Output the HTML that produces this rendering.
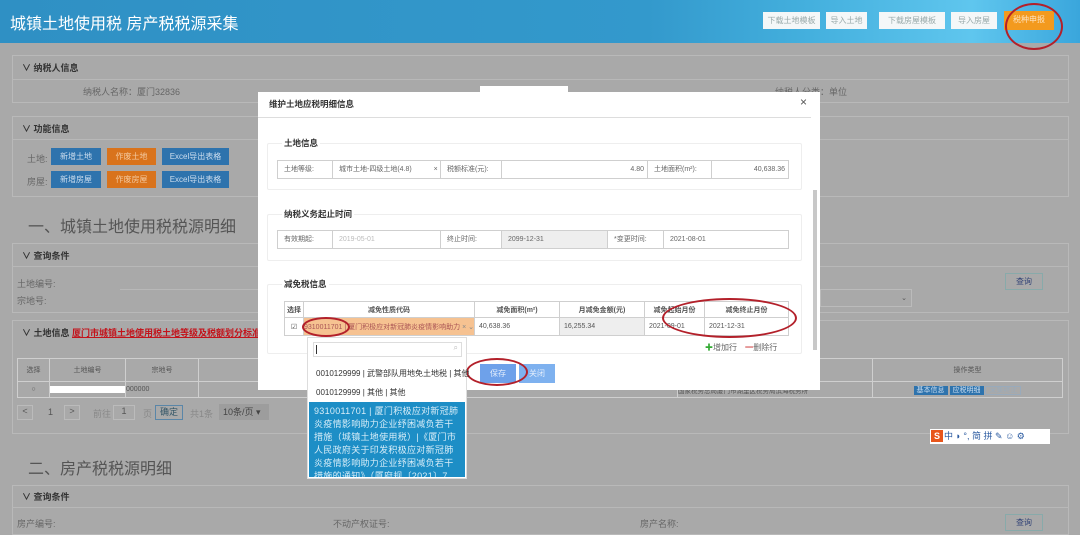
<!DOCTYPE html>
<html><head><meta charset="utf-8"><style>
*{box-sizing:border-box;margin:0;padding:0}
body{width:1080px;height:529px;overflow:hidden;background:#a9a9a9;font-family:"Liberation Sans","Noto Sans CJK SC",sans-serif;font-size:9px;color:#555;position:relative}
.a{position:absolute}
.hd{left:0;top:0;width:1080px;height:43px;background:linear-gradient(90deg,#2f90c4 0%,#3399cc 60%,#44b0de 75%,#5fc6ee 90%,#3aa6dc 100%)}
.hb{position:absolute;top:12px;height:17px;background:#f4f7f8;color:#9aa;font-size:8px;text-align:center;line-height:17px}
.pn{position:absolute;border:1px solid #b9b9b9;background:#a9a9a9}
.pt{position:absolute;left:10px;font-size:9px;font-weight:bold;color:#333}
.btn{position:absolute;height:17px;font-size:8px;color:#cde;text-align:center;line-height:17px}
.bl{background:#2e73ad}.or{background:#d9731c;color:#f3c9a0}
.ln{position:absolute;height:1px;background:#b8b8b8}
.m{left:258px;top:92px;width:562px;height:298px;background:#fff}
.fs{position:absolute;border:1px solid #eee;border-radius:2px}
.lg{position:absolute;font-size:8.5px;font-weight:bold;color:#333;background:#fff;padding:0 2px}
.row{position:absolute;border:1px solid #cfcfcf;display:flex;height:19px}
.row div{border-right:1px solid #cfcfcf;font-size:7px;line-height:17px;padding-left:6px;color:#666;white-space:nowrap;overflow:hidden}
td,th{border:1px solid #cfcfcf;font-size:7px;color:#555;font-weight:normal;white-space:nowrap;overflow:hidden}
.ell{position:absolute;border:2px solid #b3202a;border-radius:50%}
</style></head><body>
<div class="a hd"></div>
<div class="a" style="left:10px;top:10px;font-size:16px;color:#fff">城镇土地使用税 房产税税源采集</div>
<div class="hb" style="left:763px;width:57px">下载土地模板</div>
<div class="hb" style="left:826px;width:41px">导入土地</div>
<div class="hb" style="left:879px;width:66px">下载房屋模板</div>
<div class="hb" style="left:951px;width:46px">导入房屋</div>
<div class="hb" style="left:1004px;width:50px;top:11px;height:19px;background:#f39a1e;color:#fde3c0">税种申报</div>
<div class="ell" style="left:1005px;top:3px;width:58px;height:47px"></div>

<div class="pn" style="left:12px;top:55px;width:1057px;height:48px"></div>
<div class="ln" style="left:12px;top:79px;width:1057px"></div>
<div class="pt" style="left:22px;top:61px">∨ 纳税人信息</div>
<div class="a" style="left:83px;top:85px;color:#666">纳税人名称：厦门32836</div>
<div class="a" style="left:480px;top:86px;width:88px;height:6px;background:#fff"></div>
<div class="a" style="left:775px;top:85px;color:#666">纳税人分类：单位</div>

<div class="pn" style="left:12px;top:116px;width:1057px;height:81px"></div>
<div class="ln" style="left:12px;top:139px;width:1057px"></div>
<div class="pt" style="left:22px;top:122px">∨ 功能信息</div>
<div class="a" style="left:27px;top:152px;color:#666">土地:</div>
<div class="a" style="left:27px;top:175px;color:#666">房屋:</div>
<div class="btn bl" style="left:51px;top:148px;width:50px">新增土地</div>
<div class="btn or" style="left:107px;top:148px;width:49px">作废土地</div>
<div class="btn bl" style="left:162px;top:148px;width:67px">Excel导出表格</div>
<div class="btn bl" style="left:51px;top:171px;width:50px">新增房屋</div>
<div class="btn or" style="left:107px;top:171px;width:49px">作废房屋</div>
<div class="btn bl" style="left:162px;top:171px;width:67px">Excel导出表格</div>

<div class="a" style="left:28px;top:213px;font-size:16px;color:#555">一、城镇土地使用税税源明细</div>
<div class="pn" style="left:12px;top:243px;width:1057px;height:70px"></div>
<div class="ln" style="left:12px;top:266px;width:1057px"></div>
<div class="pt" style="left:22px;top:249px">∨ 查询条件</div>
<div class="a" style="left:17px;top:277px;color:#666">土地编号:</div>
<div class="a" style="left:17px;top:294px;color:#666">宗地号:</div>
<div class="ln" style="left:120px;top:289px;width:140px"></div>
<div class="a" style="left:820px;top:289px;width:92px;height:18px;border:1px solid #bbb"><span style="position:absolute;right:4px;top:4px;font-size:7px">⌄</span></div>
<div class="a" style="left:1005px;top:273px;width:38px;height:17px;border:1px solid #8aa;color:#347;text-align:center;line-height:15px;font-size:8px">查询</div>

<div class="pn" style="left:12px;top:320px;width:1057px;height:114px"></div>
<div class="pt" style="left:22px;top:326px">∨ 土地信息 <span style="color:#c3131b;text-decoration:underline">厦门市城镇土地使用税土地等级及税额划分标准</span></div>
<table class="a" style="left:17px;top:358px;width:1046px;border-collapse:collapse;height:40px">
<tr style="height:23px"><th style="width:32px">选择</th><th style="width:56px">土地编号</th><th style="width:73px">宗地号</th><th></th><th style="width:195px">所</th><th style="width:190px">操作类型</th></tr>
<tr><td style="text-align:center">○</td><td><div style="width:75px;height:7px;background:#fff"></div></td><td>000000</td><td></td><td style="font-size:6.5px">国家税务总局厦门市湖里区税务局滨海税务所</td><td style="text-align:center"><span style="background:#2e73ad;color:#cde;padding:1px 3px">基本信息</span> <span style="background:#2e73ad;color:#cde;padding:1px 3px">应税明细</span> <span style="border:1px solid #9ab;color:#9ab;padding:0 3px">采集终止</span></td></tr>
</table>
<div class="a" style="left:17px;top:405px;width:16px;height:15px;border:1px solid #bbb;text-align:center">&lt;</div>
<div class="a" style="left:48px;top:407px">1</div>
<div class="a" style="left:64px;top:405px;width:16px;height:15px;border:1px solid #bbb;text-align:center">&gt;</div>
<div class="a" style="left:93px;top:407px;color:#888">前往</div>
<div class="a" style="left:113px;top:405px;width:22px;height:15px;border:1px solid #bbb;text-align:center">1</div>
<div class="a" style="left:143px;top:407px;color:#888">页</div>
<div class="a" style="left:155px;top:405px;width:28px;height:15px;border:1px solid #5a86a8;color:#356;text-align:center;line-height:13px">确定</div>
<div class="a" style="left:190px;top:407px;color:#888">共1条</div>
<div class="a" style="left:219px;top:404px;width:50px;height:16px;background:#9d9d9d;padding-left:4px;line-height:16px;color:#444">10条/页 ▾</div>

<div class="a" style="left:28px;top:455px;font-size:16px;color:#555">二、房产税税源明细</div>
<div class="pn" style="left:12px;top:485px;width:1057px;height:50px"></div>
<div class="ln" style="left:12px;top:507px;width:1057px"></div>
<div class="pt" style="left:22px;top:490px">∨ 查询条件</div>
<div class="a" style="left:17px;top:517px;color:#666">房产编号:</div>
<div class="a" style="left:333px;top:517px;color:#666">不动产权证号:</div>
<div class="a" style="left:640px;top:517px;color:#666">房产名称:</div>
<div class="a" style="left:1005px;top:514px;width:38px;height:17px;border:1px solid #8aa;color:#347;text-align:center;line-height:15px;font-size:8px">查询</div>

<div class="a" style="left:930px;top:429px;width:120px;height:15px;background:#fff;font-size:9px;color:#2a5aa0;line-height:15px;padding-left:14px">中 ◗ °, 简 拼 ✎ ☺ ⚙</div>
<div class="a" style="left:931px;top:430px;width:12px;height:12px;background:#e8561c;color:#fff;font-size:9px;text-align:center;line-height:12px;font-weight:bold">S</div>

<div class="a m"></div>
<div class="a" style="left:269px;top:98px;font-size:8.5px;font-weight:bold;color:#333">维护土地应税明细信息</div>
<div class="a" style="left:800px;top:95px;font-size:12px;color:#555">×</div>
<div class="a" style="left:258px;top:117px;width:553px;height:1px;background:#ddd"></div>
<div class="a" style="left:813px;top:190px;width:4px;height:160px;background:#c8c8c8"></div>

<div class="fs" style="left:267px;top:143px;width:535px;height:47px"></div>
<div class="lg" style="left:282px;top:137px">土地信息</div>
<div class="row" style="left:277px;top:160px;width:512px">
<div style="width:55px">土地等级:</div><div style="width:108px">城市土地-四级土地(4.8) <span style="margin-left:20px">× ⌄</span></div><div style="width:61px">税额标准(元):</div><div style="width:146px;text-align:right;padding-right:3px">4.80</div><div style="width:64px">土地面积(m²):</div><div style="flex:1;border:none;text-align:right;padding-right:3px">40,638.36</div></div>

<div class="fs" style="left:267px;top:214px;width:535px;height:47px"></div>
<div class="lg" style="left:282px;top:208px">纳税义务起止时间</div>
<div class="row" style="left:277px;top:230px;width:512px">
<div style="width:55px">有效期起:</div><div style="width:108px;color:#bbb">2019-05-01</div><div style="width:61px">终止时间:</div><div style="width:106px;background:#eee">2099-12-31</div><div style="width:56px">*变更时间:</div><div style="flex:1;border:none">2021-08-01</div></div>

<div class="fs" style="left:267px;top:284px;width:535px;height:70px"></div>
<div class="lg" style="left:282px;top:278px">减免税信息</div>
<table class="a" style="left:284px;top:301px;width:505px;border-collapse:collapse;background:#fff">
<tr style="height:16px"><th style="width:19px;font-weight:bold">选择</th><th style="width:163px;font-weight:bold">减免性质代码</th><th style="width:85px;font-weight:bold">减免面积(m²)</th><th style="width:85px;font-weight:bold">月减免金额(元)</th><th style="width:60px;font-weight:bold">减免起始月份</th><th style="font-weight:bold">减免终止月份</th></tr>
<tr style="height:18px"><td style="text-align:center">☑</td><td style="background:#f6c291;color:#a55">9310011701 | 厦门积极应对新冠肺炎疫情影响助力 <span style="color:#888">× ⌄</span></td><td style="padding-left:4px">40,638.36</td><td style="background:#eee;padding-left:4px">16,255.34</td><td style="padding-left:4px">2021-09-01</td><td style="padding-left:4px">2021-12-31</td></tr>
</table>
<div class="ell" style="left:302px;top:317px;width:48px;height:20px"></div>
<div class="ell" style="left:662px;top:298px;width:135px;height:40px"></div>
<div class="a" style="left:705px;top:342px;font-size:8px;color:#666"><span style="color:#3a3">✚</span>增加行 <span style="color:#c33;margin-left:6px">━</span>删除行</div>
<div class="a" style="left:480px;top:364px;width:36px;height:19px;background:#6ea1ea;color:#e4eefc;text-align:center;line-height:19px;font-size:8px">保存</div>
<div class="a" style="left:519px;top:364px;width:36px;height:19px;background:#7eb1ef;color:#e4eefc;text-align:center;line-height:19px;font-size:8px">关闭</div>
<div class="ell" style="left:466px;top:358px;width:62px;height:28px"></div>

<div class="a" style="left:307px;top:337px;width:160px;height:142px;background:#fff;border:1px solid #ddd"></div>
<div class="a" style="left:313px;top:342px;width:149px;height:15px;border:1px solid #ddd;font-size:8px;color:#bbb;text-align:right;padding-right:3px">⌕</div>
<div class="a" style="left:316px;top:345px;width:1px;height:9px;background:#333"></div>
<div class="a" style="left:316px;top:368px;font-size:8px;color:#333;white-space:nowrap">0010129999 | 武警部队用地免土地税 | 其他</div>
<div class="a" style="left:316px;top:387px;font-size:8px;color:#333">0010129999 | 其他 | 其他</div>
<div class="a" style="left:309px;top:402px;width:156px;height:75px;background:#1d8ec6;color:#d7edf8;font-size:9px;line-height:13px;padding:3px 5px;overflow:hidden;letter-spacing:0.3px">9310011701 | 厦门积极应对新冠肺炎疫情影响助力企业纾困减负若干措施（城镇土地使用税）|《厦门市人民政府关于印发积极应对新冠肺炎疫情影响助力企业纾困减负若干措施的通知》（厦府规〔2021〕7号）第二条第二款</div>
</body></html>
